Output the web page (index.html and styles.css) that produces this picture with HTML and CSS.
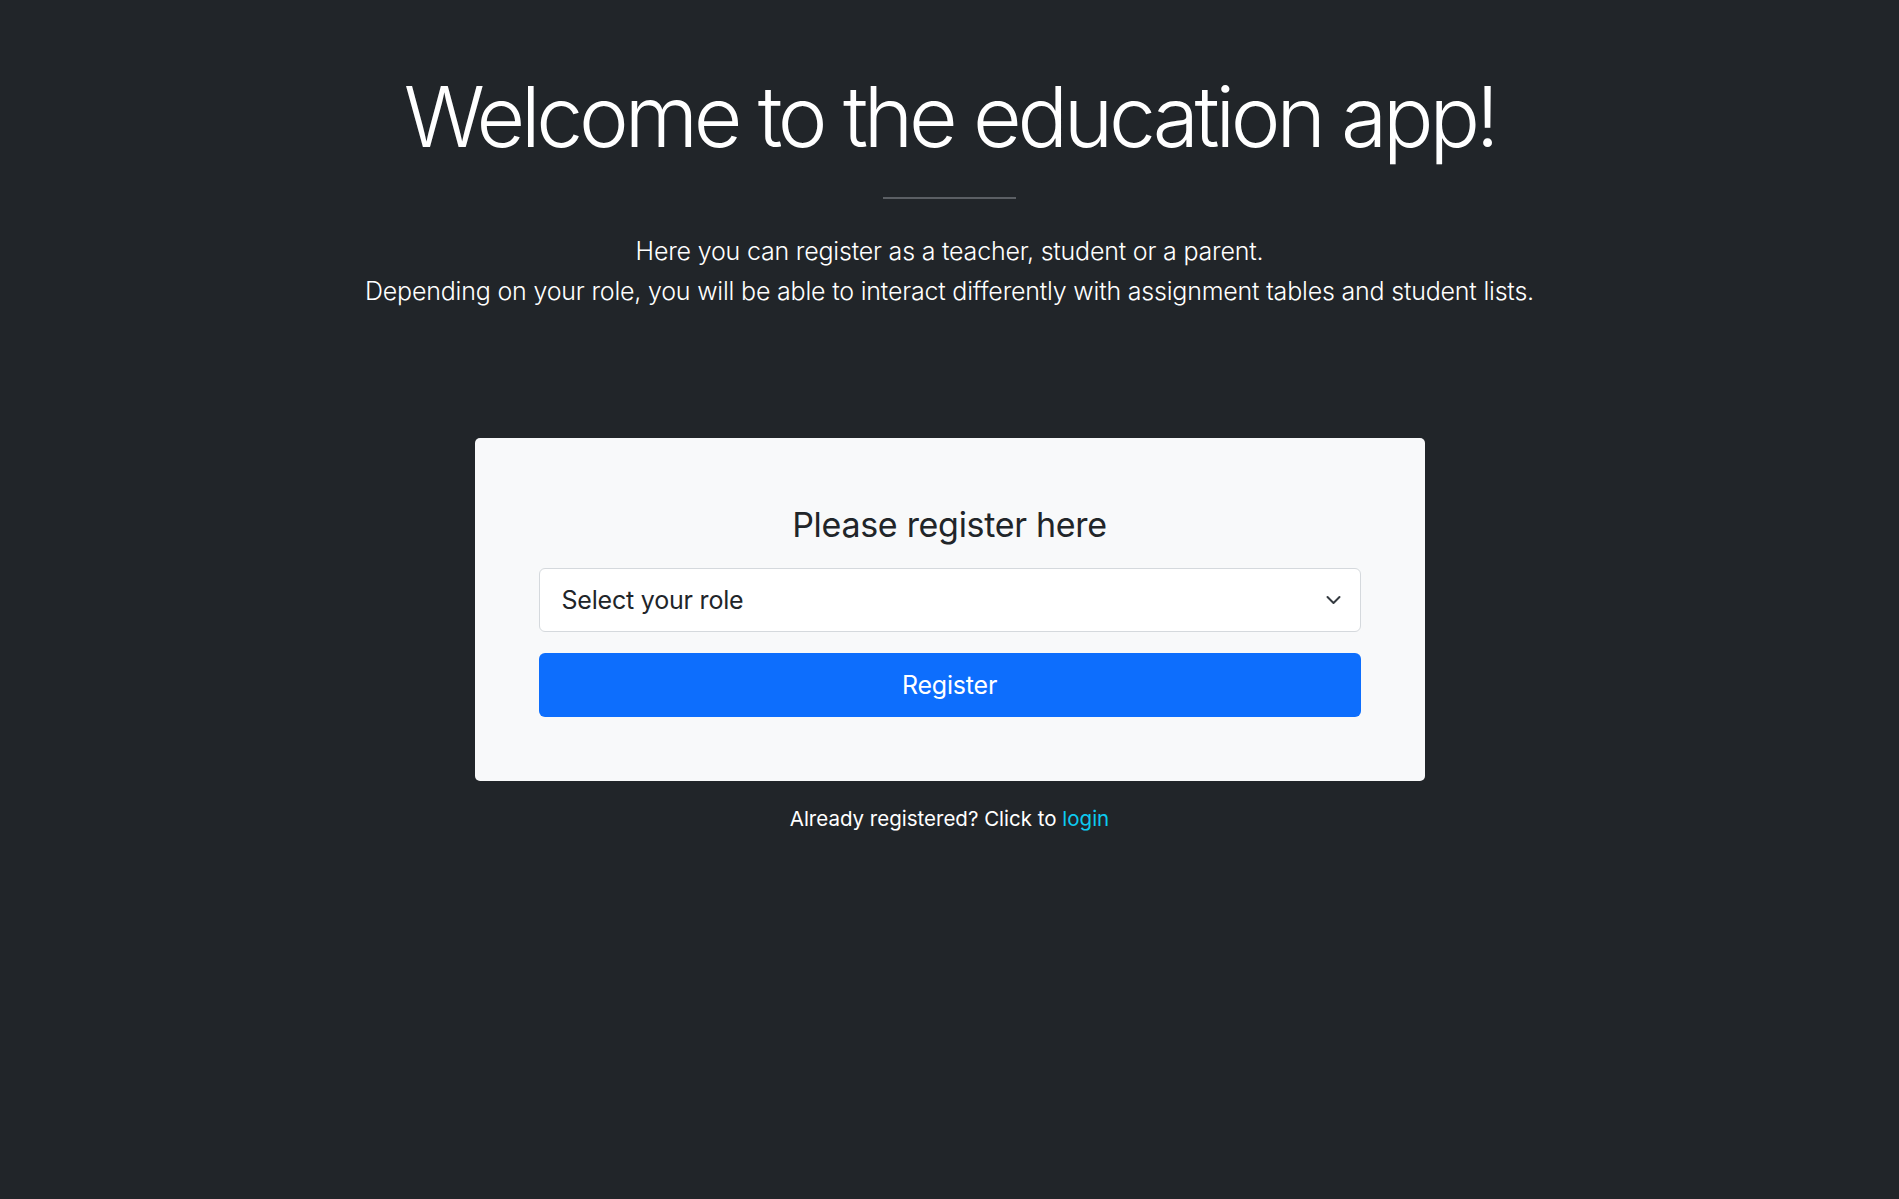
FILE: index.html
```html
<!DOCTYPE html>
<html lang="en">
<head>
<meta charset="utf-8">
<title>Education app</title>
<link rel="stylesheet" href="styles.css">
</head>
<body>
<main class="page">
  <header class="intro">
    <h1 class="title">Welcome to the education app!</h1>
    <hr class="divider">
    <p class="lead">Here you can register as a teacher, student or a parent.<br>Depending on your role, you will be able to interact differently with assignment tables and student lists.</p>
  </header>
  <section class="card">
    <h2 class="card-title">Please register here</h2>
    <form class="form">
      <div class="select">
        <span class="select-text">Select your role</span>
        <svg class="chevron" viewBox="0 0 16 16" width="21" height="16" aria-hidden="true"><path fill="none" stroke="#343a40" stroke-linecap="round" stroke-linejoin="round" stroke-width="2" d="M2 5l6 6 6-6"/></svg>
      </div>
      <button type="button" class="btn">Register</button>
    </form>
  </section>
  <p class="login">Already registered? Click to <a class="login-link" href="#">login</a></p>
</main>
</body>
</html>
```
FILE: styles.css
```css
* { box-sizing: border-box; }
html, body { margin: 0; padding: 0; }
body {
  background: #212529;
  color: #fff;
  font-family: Inter, "Noto Sans", sans-serif;
  min-height: 1199px;
}
.page {
  display: flex;
  flex-direction: column;
  align-items: center;
  padding-top: 67px;
}
.intro {
  display: flex;
  flex-direction: column;
  align-items: center;
  text-align: center;
}
.title {
  margin: 0;
  font-size: 84px;
  font-weight: 300;
  line-height: 1.2;
  letter-spacing: -4.2px;
}
.divider {
  width: 133px;
  height: 0;
  border: 0;
  border-top: 2px solid #5b5f64;
  margin: 29px 0 0;
}
.lead {
  margin: 32px 0 0;
  font-size: 25px;
  font-weight: 300;
  line-height: 40px;
  letter-spacing: -0.2px;
}
.card {
  margin-top: 127px;
  width: 950px;
  background: #f8f9fa;
  border-radius: 5px;
  padding: 67px 64px 64px;
  color: #212529;
  text-align: center;
}
.card-title {
  margin: 0 0 22px;
  font-size: 34px;
  font-weight: 400;
  line-height: 1.2;
  letter-spacing: -0.3px;
}
.form {
  display: flex;
  flex-direction: column;
  gap: 21px;
}
.select {
  height: 64px;
  display: flex;
  align-items: center;
  justify-content: space-between;
  padding: 0 16px 0 22px;
  background: #fff;
  border: 1px solid #d5d9dd;
  border-radius: 6px;
  text-align: left;
}
.select-text {
  font-size: 25px;
  letter-spacing: -0.2px;
  color: #212529;
}
.chevron { display: block; }
.btn {
  height: 64px;
  border: 0;
  border-radius: 6px;
  background: #0d6efd;
  color: #fff;
  font-family: inherit;
  font-size: 25px;
  font-weight: 400;
  letter-spacing: -0.2px;
  cursor: pointer;
}
.login {
  margin: 23px 0 0;
  font-size: 20.5px;
  line-height: 1.5;
}
.login-link {
  color: #0dcaf0;
  text-decoration: none;
}
```
